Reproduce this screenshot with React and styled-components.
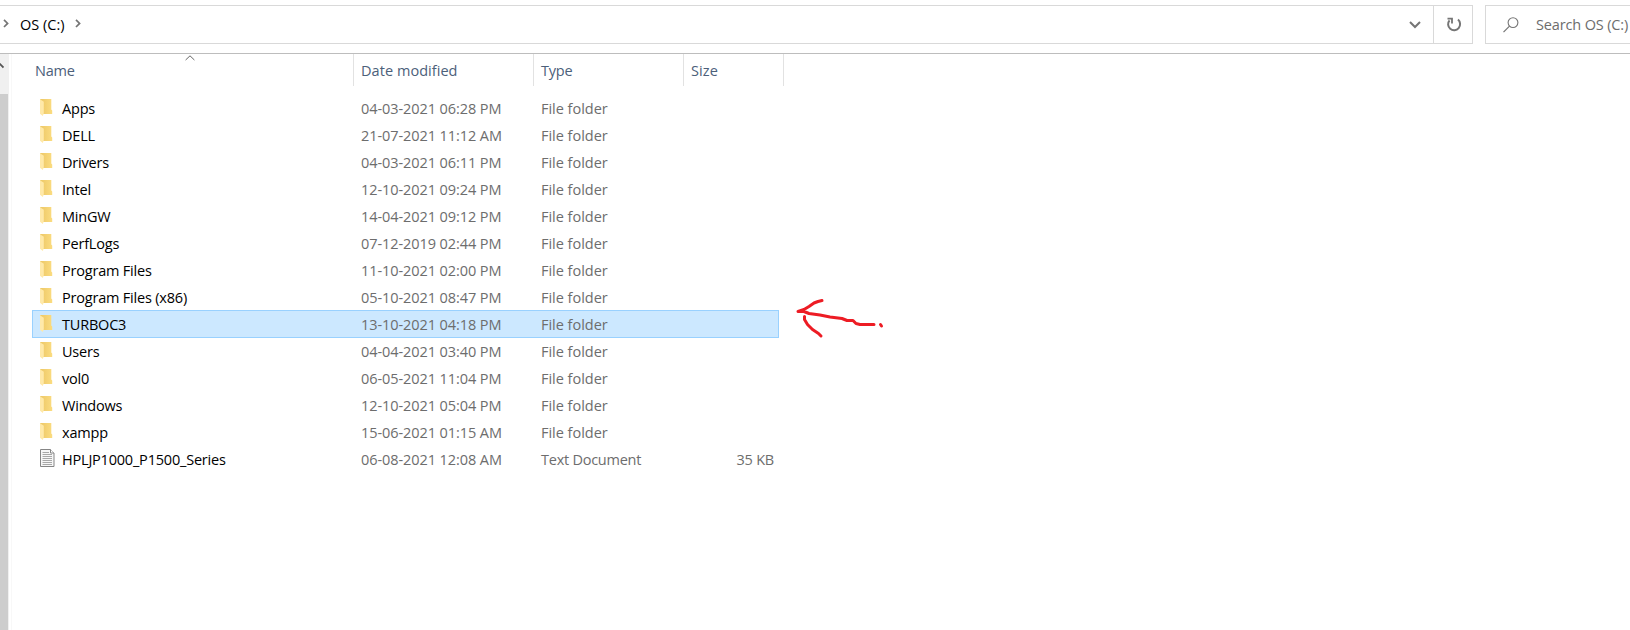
import React from "react";
import styled, { createGlobalStyle } from "styled-components";

const GlobalStyle = createGlobalStyle`
  * { box-sizing: border-box; }
  body { margin: 0; background: #fff; overflow: hidden; }
`;

const Window = styled.div`
  position: relative;
  width: 1630px;
  height: 630px;
  overflow: hidden;
  display: flex;
  flex-direction: column;
  background: #fff;
  color: #000;
  font: 14.5px/27px "Open Sans", "Noto Sans", sans-serif;
  white-space: pre;
`;

const Toolbar = styled.header`
  flex: none;
  height: 54px;
  padding-top: 5px;
  display: flex;
  align-items: flex-start;
  border-bottom: 1px solid #bdbdbd;
`;

const AddressBar = styled.div`
  width: 1473px;
  height: 39px;
  display: flex;
  align-items: center;
  border: 1px solid #d9d9d9;
  border-left: 0;
`;

const Glyph = styled.svg`
  flex: none;
  display: block;
  overflow: visible;
  margin-left: ${(p) => p.$left || 0}px;
  margin-top: ${(p) => p.$top || 0}px;
`;

const Label = styled.span`
  letter-spacing: ${(p) => p.$track ?? -0.2}px;
`;

const Crumb = styled(Label)`
  margin-left: 11px;
  width: 47px;
`;

const RefreshButton = styled.button`
  width: 39px;
  height: 37px;
  padding: 0;
  display: flex;
  align-items: center;
  justify-content: center;
  background: none;
  border: 0;
  border-left: 1px solid #d9d9d9;
`;

const HistoryToggle = styled.div`
  flex: 1;
  display: flex;
  justify-content: flex-end;
  padding-right: 12px;
`;

const SearchBox = styled.div`
  flex: 1;
  height: 39px;
  margin-left: 12px;
  display: flex;
  align-items: center;
  border: 1px solid #d9d9d9;
  border-right: 0;
  color: #6d6d6d;
`;

const SearchText = styled(Label)`
  margin-left: 17px;
`;

const Body = styled.main`
  flex: 1;
  display: flex;
`;

const Scrollbar = styled.div`
  width: 9px;
  padding-top: 40px;
  display: flex;
  position: relative;
  background: #f0f0f0;
`;

const Thumb = styled.div`
  width: 8px;
  background: #cdcdcd;
`;

const ScrollArrow = styled.svg`
  position: absolute;
  left: 0;
  top: 8px;
`;

const Content = styled.section`
  position: relative;
  flex: 1;
  margin-left: 2px;
  border-left: 1px solid #f8f8f8;
`;

const Headings = styled.div`
  display: flex;
  height: 32px;
  padding-left: 16px;
  color: #4c607a;
`;

const Heading = styled.div`
  width: ${(p) => p.$width}px;
  height: 32px;
  padding: 3px 0 0 7px;
  border-right: 1px solid #e2e2e2;
`;

const SortMark = styled.svg`
  position: absolute;
  left: 173px;
  top: 1px;
`;

const Rows = styled.div`
  padding: 8px 0 0 20px;
`;

const Row = styled.div`
  width: 747px;
  height: 28px;
  margin-bottom: -1px;
  display: grid;
  grid-template-columns: 29px 299px 180px 150px 1fr;
  border: 1px solid ${(p) => (p.$selected ? "#99d1ff" : "transparent")};
  background: ${(p) => (p.$selected ? "#cce8ff" : "transparent")};
`;

const Detail = styled(Label)`
  color: #6d6d6d;
`;

const SizeCell = styled(Detail)`
  width: 83px;
  text-align: right;
`;

const Scribble = styled.svg`
  position: absolute;
  left: 790px;
  top: 290px;
`;

const FolderIcon = () => (
  <Glyph $left={7} $top={4} width="13" height="18" viewBox="0 0 13 18">
    <defs>
      <linearGradient id="folderBack" x1="0" x2="1">
        <stop offset="0.2" stopColor="#efcb6b" />
        <stop offset="1" stopColor="#fbdc80" />
      </linearGradient>
    </defs>
    <path d="M0 0h11.300v10.500l.9 1V15H3z" fill="url(#folderBack)" />
    <path d="M0 .3 3.800 2.800v11.500L2.800 17 0 14.700z" fill="#ffe9a9" />
  </Glyph>
);

const DocumentIcon = () => (
  <Glyph $left={7} $top={3} width="15" height="19" viewBox="0 0 15 19">
    <path d="M.5.5h10l3.500 3.500v13.500H.5z" fill="#f7f7f7" stroke="#858585" />
    <path d="M10.500.5v3.500h3.500" fill="#fff" stroke="#858585" />
    <path d="M2.500 3.500h6.500M2.500 5.500h9.500M2.500 7.500h9.500M2.500 9.500h9.500M2.500 11.500h9.500M2.500 13.500h9.500M2.500 15.500h9.500" stroke="#a8a8a8" />
  </Glyph>
);

const Chevron = ({ left }) => (
  <Glyph $left={left} $top={-2} width="6" height="9" viewBox="0 0 6 9">
    <path d="M1 .8 4.600 4.400 1 8" fill="none" stroke="#757575" strokeWidth="1.7" />
  </Glyph>
);

const columns = [
  ["Name", 326],
  ["Date modified", 180, 0.05],
  ["Type", 150],
  ["Size", 100, 0.1],
];

const files = [
  ["Apps", "04-03-2021 06:28 PM"],
  ["DELL", "21-07-2021 11:12 AM"],
  ["Drivers", "04-03-2021 06:11 PM"],
  ["Intel", "12-10-2021 09:24 PM"],
  ["MinGW", "14-04-2021 09:12 PM"],
  ["PerfLogs", "07-12-2019 02:44 PM"],
  ["Program Files", "11-10-2021 02:00 PM"],
  ["Program Files (x86)", "05-10-2021 08:47 PM"],
  ["TURBOC3", "13-10-2021 04:18 PM"],
  ["Users", "04-04-2021 03:40 PM"],
  ["vol0", "06-05-2021 11:04 PM"],
  ["Windows", "12-10-2021 05:04 PM"],
  ["xampp", "15-06-2021 01:15 AM"],
  ["HPLJP1000_P1500_Series", "06-08-2021 12:08 AM", "Text Document", "35 KB"],
];

export default function App() {
  return (
    <Window>
      <GlobalStyle />
      <Toolbar>
        <AddressBar>
          <Chevron left={3} />
          <Crumb $track={0}>OS (C:)</Crumb>
          <Chevron left={8} />
          <HistoryToggle>
            <Glyph width="12" height="8" viewBox="0 0 12 8">
              <path d="M1 1 6 6l5-5" fill="none" stroke="#757575" strokeWidth="2" />
            </Glyph>
          </HistoryToggle>
          <RefreshButton aria-label="Refresh">
            <Glyph $left={2} width="16" height="16" viewBox="0 0 16 16">
              <path d="M12 2.600a6 6 0 1 1-8.500.7" fill="none" stroke="#757575" strokeWidth="2" />
              <path d="M1.500 1.600h4.500v5" fill="none" stroke="#757575" strokeWidth="1.8" />
            </Glyph>
          </RefreshButton>
        </AddressBar>
        <SearchBox>
          <Glyph $left={17} width="16" height="16" viewBox="0 0 16 16">
            <circle cx="10" cy="5.600" r="4.900" fill="none" stroke="#757575" strokeWidth="1.1" />
            <path d="M6.500 9.200.5 15.200" stroke="#757575" strokeWidth="1.2" />
          </Glyph>
          <SearchText $track={-0.15}>Search OS (C:)</SearchText>
        </SearchBox>
      </Toolbar>
      <Body>
        <Scrollbar>
          <ScrollArrow width="4" height="7" viewBox="0 0 4 7">
            <path d="M-3 5.500.2 2.200 3.500 5.500" fill="none" stroke="#555" strokeWidth="1.8" />
          </ScrollArrow>
          <Thumb />
        </Scrollbar>
        <Content>
          <SortMark width="10" height="6" viewBox="0 0 10 6">
            <path d="M.6 5 5 .8 9.400 5" fill="none" stroke="#666" />
          </SortMark>
          <Headings>
            {columns.map(([name, width, track]) => (
              <Heading key={name} $width={width}>
                <Label $track={track}>{name}</Label>
              </Heading>
            ))}
          </Headings>
          <Rows>
            {files.map(([name, date, type = "File folder", size]) => (
              <Row key={name} $selected={name === "TURBOC3"}>
                {size ? <DocumentIcon /> : <FolderIcon />}
                <Label>{name}</Label>
                <Detail $track={-0.08}>{date}</Detail>
                <Detail $track={size ? -0.25 : -0.02}>{type}</Detail>
                <SizeCell>{size}</SizeCell>
              </Row>
            ))}
          </Rows>
        </Content>
      </Body>
      <Scribble width="100" height="50" viewBox="790 290 100 50">
        <g fill="none" stroke="#ed1c24" strokeWidth="3" strokeLinecap="round" strokeLinejoin="round">
          <path d="M822 300.500l-4 1-4 1.500-5 3.500-5 3-6 2h6l5 2 11 1.500 10 2 12 1.500 5 2h6l3 3 4 1h14" />
          <path d="M804.500 316.500v3l3 5 5 5 6 4 2.500 2.500" />
          <path d="M880.500 324.500l1 1.500" />
        </g>
      </Scribble>
    </Window>
  );
}
